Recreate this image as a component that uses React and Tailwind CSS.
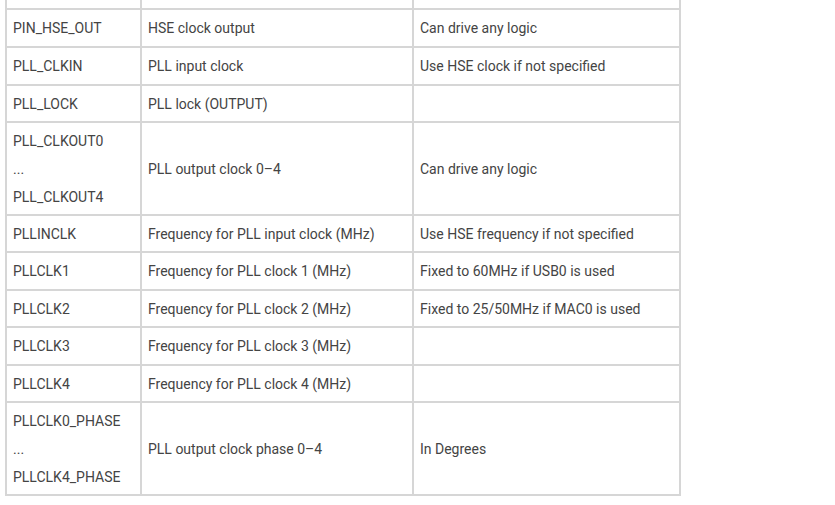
import React from 'react';

const rows = [
  { h: 'h-[36px]', a: ['PIN_HSE_OUT'], b: 'HSE clock output', c: 'Can drive any logic' },
  { h: 'h-[36px]', a: ['PLL_CLKIN'], b: 'PLL input clock', c: 'Use HSE clock if not specified' },
  { h: 'h-[35px]', a: ['PLL_LOCK'], b: 'PLL lock (OUTPUT)', c: '' },
  { h: 'h-[91px]', a: ['PLL_CLKOUT0', '...', 'PLL_CLKOUT4'], b: 'PLL output clock 0–4', c: 'Can drive any logic' },
  { h: 'h-[35px]', a: ['PLLINCLK'], b: 'Frequency for PLL input clock (MHz)', c: 'Use HSE frequency if not specified' },
  { h: 'h-[36px]', a: ['PLLCLK1'], b: 'Frequency for PLL clock 1 (MHz)', c: 'Fixed to 60MHz if USB0 is used' },
  { h: 'h-[35px]', a: ['PLLCLK2'], b: 'Frequency for PLL clock 2 (MHz)', c: 'Fixed to 25/50MHz if MAC0 is used' },
  { h: 'h-[36px]', a: ['PLLCLK3'], b: 'Frequency for PLL clock 3 (MHz)', c: '' },
  { h: 'h-[35px]', a: ['PLLCLK4'], b: 'Frequency for PLL clock 4 (MHz)', c: '' },
  { h: 'h-[91px]', a: ['PLLCLK0_PHASE', '...', 'PLLCLK4_PHASE'], b: 'PLL output clock phase 0–4', c: 'In Degrees' },
];

function Cell({ h, children }) {
  return (
    <div className={`${h} bg-white flex flex-col justify-center pl-[6px]`}>
      {children}
    </div>
  );
}

export default function App() {
  return (
    <div className="w-[835px] h-[505px] overflow-hidden bg-white font-['Roboto','Liberation_Sans',sans-serif] text-[14px] text-[#444]">
      {/* top row is cut off by the frame, only its borders show */}
      <div className="ml-[5px] -mt-[30px] w-[676px] grid grid-cols-[133px_270px_265px] gap-[2px] p-[2px] bg-[#d6d6d6]">
        <div className="h-[36px] bg-white" />
        <div className="h-[36px] bg-white" />
        <div className="h-[36px] bg-white" />
        {rows.map((r, i) => (
          <React.Fragment key={i}>
            <Cell h={r.h}>
              {r.a.length === 1 ? (
                <span className="leading-[20px]">{r.a[0]}</span>
              ) : (
                r.a.map((t, j) => (
                  <span key={j} className="leading-[28px]">{t}</span>
                ))
              )}
            </Cell>
            <Cell h={r.h}>
              <span className="leading-[20px]">{r.b}</span>
            </Cell>
            <Cell h={r.h}>
              <span className="leading-[20px]">{r.c}</span>
            </Cell>
          </React.Fragment>
        ))}
      </div>
    </div>
  );
}
